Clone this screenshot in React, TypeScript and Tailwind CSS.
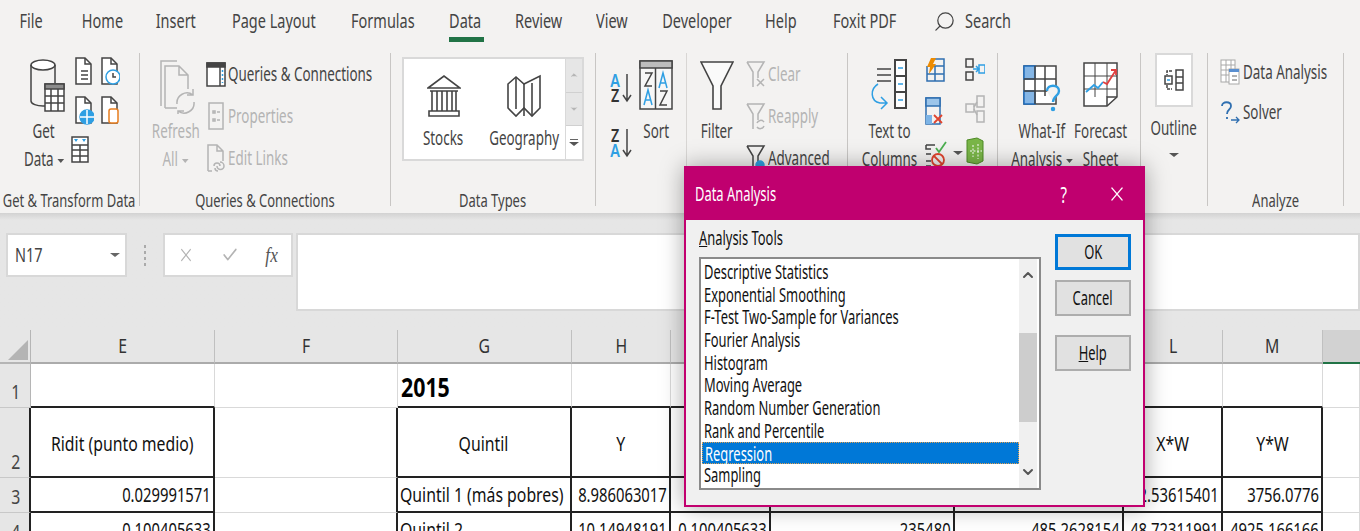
import React from "react";
import { X, Check, Search, ChevronUp, ChevronDown } from "lucide-react";

const ink = "#444444";
const blue = "#2f9fe3";
const faint = "#b4b4b4";

// the screenshot is squeezed sideways, so all text goes through this
const squeeze = {
  tab: "scale-x-[0.725]",
  label: "scale-x-[0.72]",
  rib: "scale-x-[0.67]",
  dlg: "scale-x-[0.68]",
  sheet: "scale-x-[0.79]",
  num: "scale-x-[0.74]",
  bold: "scale-x-[0.82]",
};

const origins = {
  center: "origin-center",
  left: "origin-left",
  right: "origin-right",
};

const T = ({ children, k = "rib", o = "center" }: { children: React.ReactNode; k?: keyof typeof squeeze; o?: keyof typeof origins }) => (
  <span className={`inline-block whitespace-nowrap ${squeeze[k]} ${origins[o]}`}>{children}</span>
);

const Doc = ({ color = ink, children }: { color?: string; children?: React.ReactNode }) => (
  <svg width="20" height="30" viewBox="-1 0 20 30" fill="none" stroke={color} strokeWidth="1.5">
    <path d="M1 2h9l6 6v20H1z" fill="#fff" />
    <path d="M10 2v6h6" />
    {children}
  </svg>
);

const Caret = ({ color = "#555" }: { color?: string }) => (
  <span className="ml-[6px] inline-block border-x-[5px] border-t-[4px] border-x-transparent align-middle" style={{ borderTopColor: color }} />
);

const GetDataIcon = () => (
  <svg width="44" height="56" viewBox="-8 0 44 56" fill="none" stroke={ink} strokeWidth="1.5">
    <ellipse cx="13" cy="6" rx="12" ry="5" fill="#fff" />
    <path d="M1 6v36c0 3 6 5 12 5h2M25 6v18" />
    <rect x="15" y="25" width="19" height="27" fill="#fff" />
    <rect x="15" y="25" width="19" height="5" fill="#8c8c8c" />
    <path d="M15 37h19M15 44h19M21 30v22M28 30v22" />
  </svg>
);

const TableIcon = () => (
  <svg width="18" height="27" viewBox="0 0 18 27" fill="none" stroke={ink} strokeWidth="1.5">
    <rect x="1" y="1" width="16" height="25" fill="#fff" />
    <path d="M1 9h16M1 14h16M1 20h16M9 9v17" />
    <path d="M3 3h4l-2 3zM11 3h4l-2 3z" fill={blue} stroke="none" />
  </svg>
);

const RefreshIcon = () => (
  <svg width="40" height="54" viewBox="-4 0 40 54" fill="none" stroke={faint} strokeWidth="1.5">
    <path d="M1 46V1h16" />
    <path d="M5 48V6h14l9 9v14M5 48h12M19 6v9h9" />
    <path d="M17 44a10 10 0 0 1 16-9M34 42a10 10 0 0 1-16 9M33 29v6h-6M18 57v-6h6" />
  </svg>
);

const QueriesIcon = () => (
  <svg width="20" height="25" viewBox="0 0 20 25" fill="none" stroke={ink} strokeWidth="1.5">
    <rect x="1" y="1" width="18" height="23" fill="#fff" />
    <rect x="1" y="1" width="18" height="4" fill={ink} />
    <path d="M14 5v19" />
    <path d="M16.500 8v13" stroke={blue} strokeDasharray="2 2" />
  </svg>
);

const PropsIcon = () => (
  <svg width="16" height="28" viewBox="0 0 16 28" fill="none" stroke={faint} strokeWidth="1.5">
    <rect x="1" y="1" width="14" height="26" />
    <path d="M5 9h2v2H5zM5 17h2v2H5zM9 10h3M9 18h3" />
  </svg>
);

const LinksIcon = () => (
  <svg width="18" height="28" viewBox="0 0 18 28" fill="none" stroke={faint} strokeWidth="1.5">
    <path d="M1 27V1h9l6 6v10M10 1v6h6M1 27h4" />
    <path d="M7 22a3 3 0 0 1 6 0M10 22a3 3 0 0 0 7 0M13 18a4 4 0 0 1 4 4M11 27a3 3 0 0 1-3-3" />
  </svg>
);

const BankIcon = () => (
  <svg width="34" height="44" viewBox="0 0 34 44" fill="none" stroke={ink} strokeWidth="1.6">
    <path d="M1 14L17 2l16 12z" />
    <path d="M3 17h28M5 17v20M10 17v20M15 17v20M20 17v20M25 17v20M29 17v20M2 37h30v5H2z" />
  </svg>
);

const MapIcon = () => (
  <svg width="36" height="44" viewBox="0 0 36 44" fill="none" stroke={ink} strokeWidth="1.6">
    <path d="M2 10L10 3l8 7 16-8v32l-8 8-8-8-8 8-8-8z" />
    <path d="M10 3v32M18 10v32M26 9v33" />
  </svg>
);

const SortAZ = ({ reverse }: { reverse?: boolean }) => (
  <span className="flex h-[32px] w-[23px] items-center justify-between">
    <span className="flex w-[12px] flex-col items-center text-[18px] leading-[15px] font-semibold">
      <span className={`scale-x-[0.8] ${reverse ? "text-[#333]" : "text-[#2f9fe3]"}`}>{reverse ? "Z" : "A"}</span>
      <span className={`scale-x-[0.8] ${reverse ? "text-[#2f9fe3]" : "text-[#333]"}`}>{reverse ? "A" : "Z"}</span>
    </span>
    <svg width="10" height="32" viewBox="0 0 10 32" fill="none" stroke={ink} strokeWidth="1.5">
      <path d="M5 2v27M1 23l4 6 4-6" />
    </svg>
  </span>
);

const SortIcon = () => (
  <svg width="34" height="50" viewBox="0 0 34 50" fill="none" stroke={ink} strokeWidth="1.5">
    <rect x="1" y="1" width="32" height="48" fill="#f7f7f7" />
    <rect x="1" y="1" width="32" height="7" fill="#bdbdbd" />
    <path d="M16.500 8v41" />
    <path d="M6 13h7l-7 13h7" />
    <path d="M5 45l4-15 4 15M6.500 40h5" stroke={blue} />
    <path d="M20 28l4-15 4 15M21.500 23h5" stroke={blue} />
    <path d="M21 31h7l-7 14h7" />
  </svg>
);

const FunnelBig = () => (
  <svg width="34" height="50" viewBox="0 0 34 50" fill="#fafafa" stroke={ink} strokeWidth="1.6">
    <path d="M1 2h32L21 26v23h-8V26z" />
  </svg>
);

const FunnelSmall = ({ kind }: { kind: "clear" | "reapply" | "advanced" }) => {
  const c = kind === "advanced" ? ink : faint;
  return (
    <svg width="20" height="28" viewBox="0 0 20 28" fill="none" stroke={c} strokeWidth="1.5">
      <path d="M1 2h17l-6 10v6M1 2l6 10v15" />
      {kind === "clear" && <path d="M11 19l7 7M18 19l-7 7" />}
      {kind === "reapply" && <path d="M11 21a4 4 0 0 1 7-1M18 24a4 4 0 0 1-7 1" />}
      {kind === "advanced" && <circle cx="14" cy="21" r="4" fill={blue} stroke={blue} />}
    </svg>
  );
};

const TextColumnsIcon = () => (
  <svg width="38" height="56" viewBox="0 0 38 56" fill="none" stroke={ink} strokeWidth="1.5">
    <path d="M7 10h14M7 16h14M7 22h14" />
    <rect x="25" y="1" width="11" height="48" fill="#fff" strokeWidth="2" />
    <path d="M25 17h11M25 33h11" strokeWidth="2" />
    <path d="M28 9h5M28 25h5M28 41h5" stroke={blue} />
    <path d="M8 25C0 30 0 42 10 44h6M11 38l6 6-6 6" stroke={blue} />
  </svg>
);

const FlashIcon = () => (
  <svg width="20" height="25" viewBox="0 0 20 25" fill="none" stroke={ink} strokeWidth="1.5">
    <path d="M2 8v15h17V1H8M10 8v15M2 16h17M9 8h10" stroke="#2f6fb0" />
    <path d="M6 0h5L8 6h3l-7 10 1-7H2z" fill="#ed8b00" stroke="none" />
  </svg>
);

const DupIcon = () => (
  <svg width="18" height="28" viewBox="0 0 18 28" fill="none" strokeWidth="1.5">
    <rect x="1" y="1" width="14" height="26" stroke="#2f6fb0" />
    <rect x="1" y="1" width="14" height="8" fill="#9cc5ea" stroke="#2f6fb0" />
    <path d="M1 18h6v9H1z" fill="#7db4e6" />
    <path d="M9 18l8 8M17 18l-8 8" stroke="#e0442e" strokeWidth="1.800" />
  </svg>
);

const ValidateIcon = () => (
  <svg width="22" height="28" viewBox="0 0 22 28" fill="none" stroke={ink} strokeWidth="1.5">
    <path d="M1 6h9M1 6v4h5M1 15h5M1 22h5M1 27h5" />
    <path d="M11 9l3 4 7-10" stroke="#4caf50" strokeWidth="1.800" />
    <circle cx="13" cy="21" r="6" stroke="#e0442e" strokeWidth="1.800" />
    <path d="M9 17l8 8" stroke="#e0442e" strokeWidth="1.800" />
  </svg>
);

const ConsolidateIcon = () => (
  <svg width="20" height="23" viewBox="0 0 20 23" fill="none" stroke={ink} strokeWidth="1.5">
    <rect x="1" y="1" width="7" height="8" />
    <rect x="1" y="14" width="7" height="8" />
    <path d="M8 11h5M11 8l3 3-3 3" stroke={blue} />
    <rect x="14" y="7" width="6" height="8" stroke={blue} />
  </svg>
);

const RelationsIcon = () => (
  <svg width="20" height="28" viewBox="0 0 20 28" fill="none" stroke={faint} strokeWidth="1.5">
    <rect x="1" y="9" width="8" height="8" />
    <rect x="12" y="1" width="7" height="11" />
    <rect x="12" y="16" width="7" height="11" />
    <path d="M9 12l3-5M9 14l3 6" />
  </svg>
);

const ModelIcon = () => (
  <svg width="20" height="28" viewBox="0 0 20 28" fill="#7ab648" stroke="#4e8a26" strokeWidth="1">
    <path d="M2 3l10-2 6 3v20l-6 3-10-2z" />
    <path d="M8 8v12M13 7v15M5 14h12" stroke="#fff" fill="none" strokeDasharray="2 1.500" />
  </svg>
);

const WhatIfIcon = () => (
  <svg width="38" height="48" viewBox="0 0 38 48" fill="none" stroke={ink} strokeWidth="1.5">
    <rect x="1" y="1" width="32" height="38" fill="#fff" />
    <rect x="1" y="1" width="11" height="13" fill="#84b6e6" stroke="#1f6fc0" />
    <rect x="1" y="26" width="11" height="13" fill="#84b6e6" stroke="#1f6fc0" />
    <path d="M12 1v38M22 1v30M1 14h32M1 26h24" />
    <path d="M24 26c0-7 12-7 12 0 0 5-6 5-6 11" stroke={blue} strokeWidth="2.400" fill="#f3f2f1" />
    <circle cx="30" cy="44" r="1.500" fill={blue} stroke={blue} />
  </svg>
);

const ForecastIcon = () => (
  <svg width="36" height="46" viewBox="0 0 36 46" fill="none" stroke={ink} strokeWidth="1.5">
    <path d="M1 1h33v34L24 44H1z" fill="#fff" />
    <path d="M24 44v-9h10" />
    <path d="M12 1v34M24 1v34M1 14h33M1 27h33" strokeWidth="1" />
    <path d="M3 30l8-7 4 3 5-6" stroke={blue} strokeWidth="1.800" />
    <path d="M20 20l4 2 9-14M28 8h5v5" stroke="#e04040" strokeWidth="1.800" />
  </svg>
);

const OutlineIcon = () => (
  <svg width="20" height="22" viewBox="0 0 20 22" fill="none" stroke={ink} strokeWidth="1.5">
    <path d="M8 2H3v4M3 16v4h5" strokeDasharray="3 1" />
    <rect x="1" y="7" width="7" height="8" />
    <path d="M3 11h3" stroke={blue} />
    <rect x="12" y="1" width="7" height="20" />
    <path d="M12 8h7M12 14h7" />
  </svg>
);

const AnalysisIcon = () => (
  <svg width="20" height="26" viewBox="0 0 20 26" fill="none" stroke="#a8a8a8" strokeWidth="1">
    <rect x="1" y="1" width="14" height="22" fill="#fff" />
    <path d="M1 6h14M1 11h14M1 16h14M6 1v22M11 1v22" />
    <rect x="9" y="10" width="10" height="15" fill="#fff" />
    <rect x="9" y="10" width="10" height="3" fill="#5a8fd0" stroke="none" />
    <path d="M12 17h5M12 21h5" stroke="#666" />
  </svg>
);

const SolverIcon = () => (
  <svg width="20" height="24" viewBox="0 0 20 24" fill="none" stroke="#2f6fb0" strokeWidth="1.800">
    <path d="M2 6c0-5 9-5 9 0 0 4-4 3-4 8" />
    <path d="M7 17v2" />
    <path d="M11 20h8M16 17l3 3-3 3" strokeWidth="1.300" />
  </svg>
);

const Group = ({ width, label, children }: { width: string; label?: string; children: React.ReactNode }) => (
  <div className={`flex h-[153px] shrink-0 flex-col border-r border-[#c8c6c4] ${width}`}>
    <div className="flex h-[137px]">{children}</div>
    <div className="flex h-[16px] justify-center text-[18px] leading-[20px]">{label && <T k="label">{label}</T>}</div>
  </div>
);

const Big = ({ width, icon, lines, top = "pt-[7px]", dim, caret }: { width: string; icon: React.ReactNode; lines: string[]; top?: string; dim?: boolean; caret?: boolean }) => (
  <div className={`flex shrink-0 flex-col items-center ${width} ${dim ? "text-[#b4b4b4]" : ""}`}>
    <div className={`flex h-[64px] items-start justify-center ${top}`}>{icon}</div>
    {lines.map((line, i) => (
      <div key={line} className="flex h-[28px] justify-center leading-[28px]">
        <T>
          {line}
          {caret && i === lines.length - 1 && <Caret color={dim ? faint : "#555"} />}
        </T>
      </div>
    ))}
  </div>
);

const Small = ({ icon, text, dim }: { icon: React.ReactNode; text: string; dim?: boolean }) => (
  <div className={`flex h-[42px] items-center ${dim ? "text-[#b4b4b4]" : ""}`}>
    <span className="flex w-[23px] shrink-0 justify-center">{icon}</span>
    <span className="ml-[1px]">
      <T o="left">{text}</T>
    </span>
  </div>
);

const tabs = [
  { name: "File", w: "w-[62px]" },
  { name: "Home", w: "w-[80px]" },
  { name: "Insert", w: "w-[68px]" },
  { name: "Page Layout", w: "w-[128px]" },
  { name: "Formulas", w: "w-[90px]" },
  { name: "Data", w: "w-[74px]" },
  { name: "Review", w: "w-[74px]" },
  { name: "View", w: "w-[72px]" },
  { name: "Developer", w: "w-[98px]" },
  { name: "Help", w: "w-[70px]" },
  { name: "Foxit PDF", w: "w-[98px]" },
];

const TabBar = () => (
  <div className="flex h-[44px] items-start text-[20px]">
    {tabs.map((t) => (
      <div key={t.name} className={`relative flex h-[42px] justify-center pt-[7px] leading-[28px] ${t.w}`}>
        <T k="tab">{t.name}</T>
        {t.name === "Data" && <span className="absolute top-[37px] left-[21px] h-[5px] w-[35px] bg-[#217346]" />}
      </div>
    ))}
    <div className="ml-[19px] flex items-center pt-[7px] leading-[28px]">
      <Search size={23} strokeWidth={1.3} className="-scale-x-100" />
      <span className="ml-[9px]">
        <T k="tab" o="left">Search</T>
      </span>
    </div>
  </div>
);

const Ribbon = () => (
  <div className="h-[169px] pt-[9px] text-[20px]">
    <div className="flex">
      <Group width="w-[140px]" label="Get & Transform Data">
        <div className="w-[74px] shrink-0 pl-[13px]">
          <Big width="w-[62px]" icon={<GetDataIcon />} lines={["Get", "Data"]} caret top="pt-[6px]" />
        </div>
        <div className="grid h-[110px] grid-cols-[26px_20px] content-start gap-y-[9px] pt-[3px]">
          <Doc><path d="M6 15h7M6 19h7M6 23h7" /></Doc>
          <Doc><circle cx="12" cy="21" r="7" stroke={blue} fill="#fff" /><path d="M12 17v4h3" /></Doc>
          <Doc><circle cx="12" cy="22" r="7" fill={blue} stroke={blue} /><path d="M5 22h14M12 15v14" stroke="#fff" /></Doc>
          <Doc><rect x="8" y="14" width="9" height="14" rx="2" stroke="#e87d1e" fill="#fff" /></Doc>
          <div className="col-span-2 -ml-[3px] pt-[2px]"><TableIcon /></div>
        </div>
      </Group>
      <Group width="w-[251px]" label="Queries & Connections">
        <div className="w-[64px] shrink-0 pl-[3px]">
          <Big width="w-[65px]" icon={<RefreshIcon />} lines={["Refresh", "All"]} dim caret />
        </div>
        <div>
          <Small icon={<QueriesIcon />} text="Queries & Connections" />
          <Small icon={<PropsIcon />} text="Properties" dim />
          <Small icon={<LinksIcon />} text="Edit Links" dim />
        </div>
      </Group>
      <Group width="w-[205px]" label="Data Types">
        <div className="mt-[4px] ml-[11px] flex h-[104px] w-[182px] border-2 border-[#d9d9d9] bg-white">
          <div className="flex w-[79px] flex-col items-center pt-[15px]">
            <BankIcon />
            <span className="mt-[8px]"><T>Stocks</T></span>
          </div>
          <div className="flex w-[82px] flex-col items-center pt-[15px]">
            <MapIcon />
            <span className="mt-[8px]"><T>Geography</T></span>
          </div>
          <div className="flex flex-1 flex-col border-l border-[#d9d9d9]">
            <div className="flex flex-1 items-center justify-center bg-[#e6e6e6]"><ChevronUp size={10} fill={faint} stroke={faint} /></div>
            <div className="flex flex-1 items-center justify-center border-t border-[#d0d0d0] bg-[#e6e6e6]"><ChevronDown size={10} fill={faint} stroke={faint} /></div>
            <div className="flex flex-1 flex-col items-center justify-center border-t border-[#d0d0d0]">
              <span className="mb-[2px] h-[1px] w-[8px] bg-[#666]" />
              <span className="-ml-[6px] flex"><Caret /></span>
            </div>
          </div>
        </div>
      </Group>
      <Group width="w-[252px]" label="">
        <div className="flex w-[91px] shrink-0 border-r border-[#d8d6d4]">
          <div className="flex w-[36px] flex-col items-end gap-[23px] pt-[19px]">
            <SortAZ />
            <SortAZ reverse />
          </div>
          <Big width="w-[48px]" icon={<SortIcon />} lines={["Sort"]} />
        </div>
        <Big width="w-[60px]" icon={<FunnelBig />} lines={["Filter"]} />
        <div className="-ml-[3px]">
          <Small icon={<FunnelSmall kind="clear" />} text="Clear" dim />
          <Small icon={<FunnelSmall kind="reapply" />} text="Reapply" dim />
          <Small icon={<FunnelSmall kind="advanced" />} text="Advanced" />
        </div>
      </Group>
      <Group width="w-[150px]" label="">
        <Big width="w-[82px]" icon={<TextColumnsIcon />} lines={["Text to", "Columns"]} top="pt-[6px]" />
        <div className="-ml-[5px] flex w-[40px] flex-col items-start gap-[14px] pt-[5px]">
          <FlashIcon />
          <DupIcon />
          <div className="flex items-center"><ValidateIcon /><Caret /></div>
        </div>
        <div className="flex flex-col items-start gap-[14px] pt-[5px]">
          <ConsolidateIcon />
          <RelationsIcon />
          <ModelIcon />
        </div>
      </Group>
      <Group width="w-[143px]" label="">
        <div className="w-[12px] shrink-0" />
        <Big width="w-[64px]" icon={<WhatIfIcon />} lines={["What-If", "Analysis"]} caret top="pt-[12px]" />
        <Big width="w-[54px]" icon={<ForecastIcon />} lines={["Forecast", "Sheet"]} top="pt-[9px]" />
      </Group>
      <Group width="w-[67px]" label="">
        <div className="flex w-full flex-col items-center">
          <div className="flex h-[54px] w-[38px] items-center justify-center border-2 border-[#d9d9d9] bg-white"><OutlineIcon /></div>
          <div className="mt-[7px] h-[28px] leading-[28px]"><T>Outline</T></div>
          <div className="mt-[11px] -ml-[6px] flex"><Caret /></div>
        </div>
      </Group>
      <Group width="w-[136px]" label="Analyze">
        <div className="pl-[12px]">
          <div className="flex h-[38px] items-center"><AnalysisIcon /><span className="ml-[3px]"><T o="left">Data Analysis</T></span></div>
          <div className="flex h-[41px] items-center"><SolverIcon /><span className="ml-[3px]"><T o="left">Solver</T></span></div>
        </div>
      </Group>
    </div>
  </div>
);

const FormulaBar = () => (
  <div className="flex h-[117px] items-start bg-[#e6e6e6] bg-gradient-to-b from-[#d2d2d2] to-[#e6e6e6] to-[7px] pt-[20px] pl-[6px] text-[20px]">
    <div className="flex h-[44px] w-[121px] items-center justify-between border-2 border-[#d8d8d8] bg-white pr-[5px] pl-[7px]">
      <T k="tab" o="left">N17</T>
      <Caret color="#666" />
    </div>
    <div className="mx-[17px] mt-[12px] flex flex-col gap-[3px]">
      <span className="h-[3px] w-[2px] bg-[#aaa]" />
      <span className="h-[3px] w-[2px] bg-[#aaa]" />
      <span className="h-[3px] w-[2px] bg-[#aaa]" />
      <span className="h-[3px] w-[2px] bg-[#aaa]" />
    </div>
    <div className="flex h-[44px] w-[130px] items-center justify-between border-2 border-[#d8d8d8] bg-white pr-[12px] pl-[10px]">
      <X size={22} strokeWidth={1.4} className="scale-x-[0.8] text-[#b4b4b4]" />
      <Check size={22} strokeWidth={2} className="scale-x-[0.8] text-[#b4b4b4]" />
      <span className="font-['Liberation_Serif',serif] text-[21px] text-[#555] italic"><T k="bold">fx</T></span>
    </div>
    <div className="ml-[3px] h-[78px] flex-1 border-2 border-[#d8d8d8] bg-white" />
  </div>
);

type CellProps = {
  children?: React.ReactNode;
  align?: "left" | "center" | "right";
  right?: boolean;
  bottom?: boolean;
  low?: boolean;
  num?: boolean;
};

const Cell = ({ children, align = "right", right, bottom, low, num }: CellProps) => (
  <div
    className={`flex items-center px-[2px] text-[#111] ${low ? "pt-[4px]" : ""} ${
      align === "center" ? "justify-center" : align === "left" ? "justify-start" : "justify-end"
    } ${right ? "border-r-2 border-r-[#222]" : "border-r border-r-[#d9d9d9]"} ${bottom ? "border-b-2 border-b-[#222]" : "border-b border-b-[#d9d9d9]"}`}
  >
    {children && <T k={num ? "num" : "sheet"} o={align}>{children}</T>}
  </div>
);

const RowHead = ({ n, dark }: { n: number; dark?: boolean }) => (
  <div className={`flex items-end bg-[#e6e6e6] pb-[3px] pl-[10px] text-[#444] ${dark ? "border-r-2 border-r-[#222]" : "border-r border-r-[#b5b5b5]"} border-b border-b-[#c8c8c8]`}>
    <T k="sheet">{n}</T>
  </div>
);

const columns = ["E", "F", "G", "H", "I", "J", "K", "L", "M"];

const Sheet = () => (
  <div className="grid grid-cols-[31px_184px_183px_174px_99px_100px_184px_169px_99px_100px_37px] grid-rows-[34px_44px_70px_35px_35px] overflow-hidden text-[20px]">
    <div className="flex items-end justify-end border-r border-b-2 border-[#b5b5b5] bg-[#e6e6e6] p-[2px]">
      <span className="h-0 w-0 border-b-[20px] border-l-[20px] border-b-[#b4b4b4] border-l-transparent" />
    </div>
    {columns.map((c) => (
      <div key={c} className="flex items-center justify-center border-r border-b-2 border-r-[#c0c0c0] border-b-[#ababab] bg-[#e6e6e6] text-[#333]">
        <T k="sheet">{c}</T>
      </div>
    ))}
    <div className="border-b-2 border-b-[#217346] bg-[#d2d2d2]" />

    <RowHead n={1} />
    <Cell bottom />
    <Cell />
    <div className="flex items-center border-r border-b-2 border-r-[#d9d9d9] border-b-[#222] px-[3px] pt-[3px] text-[26px] font-bold text-black">
      <T k="bold" o="left">2015</T>
    </div>
    <Cell bottom />
    <Cell bottom />
    <Cell bottom />
    <Cell bottom />
    <Cell bottom />
    <Cell bottom />
    <Cell />

    <RowHead n={2} dark />
    <Cell right bottom low align="center">Ridit (punto medio)</Cell>
    <Cell right />
    <Cell right bottom low align="center">Quintil</Cell>
    <Cell right bottom low align="center">Y</Cell>
    <Cell right bottom align="center" />
    <Cell right bottom align="center" />
    <Cell right bottom align="center" />
    <Cell right bottom low align="center">X*W</Cell>
    <Cell right bottom low align="center">Y*W</Cell>
    <Cell />

    <RowHead n={3} dark />
    <Cell right bottom num>0.029991571</Cell>
    <Cell right />
    <Cell right bottom align="left">Quintil 1 (más pobres)</Cell>
    <Cell right bottom num>8.986063017</Cell>
    <Cell right bottom />
    <Cell right bottom />
    <Cell right bottom />
    <Cell right bottom num>12.53615401</Cell>
    <Cell right bottom num>3756.0776</Cell>
    <Cell />

    <RowHead n={4} dark />
    <Cell right bottom num>0.100405633</Cell>
    <Cell right />
    <Cell right bottom align="left">Quintil 2</Cell>
    <Cell right bottom num>10.14948191</Cell>
    <Cell right bottom num>0.100405633</Cell>
    <Cell right bottom num>235480</Cell>
    <Cell right bottom num>485.2628154</Cell>
    <Cell right bottom num>48.72311991</Cell>
    <Cell right bottom num>4925.166166</Cell>
    <Cell />
  </div>
);

const tools = [
  "Descriptive Statistics",
  "Exponential Smoothing",
  "F-Test Two-Sample for Variances",
  "Fourier Analysis",
  "Histogram",
  "Moving Average",
  "Random Number Generation",
  "Rank and Percentile",
  "Regression",
  "Sampling",
];

const DialogButton = ({ primary, children }: { primary?: boolean; children: React.ReactNode }) => (
  <div className={`flex h-[36px] w-[76px] items-center justify-center bg-[#e1e1e1] ${primary ? "border-[3px] border-[#0078d7]" : "border-2 border-[#adadad]"}`}>
    <T k="dlg">{children}</T>
  </div>
);

const Dialog = () => (
  <div className="absolute top-[166px] left-[684px] flex h-[341px] w-[461px] flex-col border-2 border-[#c2006f] bg-[#f0f0f0] text-[#111] shadow-[0_0_22px_rgba(0,0,0,0.35)]">
    <div className="-mx-[2px] -mt-[2px] flex h-[54px] shrink-0 items-center justify-between bg-[#c0006f] pt-[1px] pr-[16px] pl-[11px] text-white">
      <T k="dlg" o="left">Data Analysis</T>
      <div className="flex items-center gap-[36px]">
        <span className="text-[22px]"><T k="dlg">?</T></span>
        <X size={24} strokeWidth={1.4} className="scale-x-[0.85]" />
      </div>
    </div>
    <div className="flex flex-1 pt-[7px] pl-[13px]">
      <div className="w-[356px]">
        <div className="h-[30px] leading-[22px]"><T k="dlg" o="left"><span className="underline">A</span>nalysis Tools</T></div>
        <div className="flex h-[233px] w-[342px] border-2 border-[#8a8a8a] bg-white pt-[2px] pl-[1px]">
          <div className="w-[317px]">
            {tools.map((t) => (
              <div
                key={t}
                className={`h-[22.700px] pl-[2px] leading-[23px] ${t === "Regression" ? "-mt-[1px] border border-dotted border-[#e0a050] bg-[#0078d7] pl-[1px] text-white" : ""}`}
              >
                <T k="dlg" o="left">{t}</T>
              </div>
            ))}
          </div>
          <div className="-mt-[2px] flex w-[18px] flex-col items-center bg-[#f0f0f0]">
            <div className="flex h-[74px] w-full items-start justify-center pt-[8px]"><ChevronUp size={16} strokeWidth={3} className="text-[#555]" /></div>
            <div className="h-[89px] w-full bg-[#cdcdcd]" />
            <div className="flex flex-1 items-end justify-center pb-[8px]"><ChevronDown size={16} strokeWidth={3} className="text-[#555]" /></div>
          </div>
        </div>
      </div>
      <div className="flex flex-col pt-[7px]">
        <DialogButton primary>OK</DialogButton>
        <div className="mt-[10px]"><DialogButton>Cancel</DialogButton></div>
        <div className="mt-[19px]"><DialogButton><span className="underline">H</span>elp</DialogButton></div>
      </div>
    </div>
  </div>
);

export default function App() {
  return (
    <div className="relative h-[531px] w-[1360px] overflow-hidden bg-[#f3f2f1] font-['Noto_Sans',sans-serif] text-[19px] leading-[24px] text-[#444]">
      <TabBar />
      <Ribbon />
      <FormulaBar />
      <div className="bg-white"><Sheet /></div>
      <Dialog />
    </div>
  );
}
